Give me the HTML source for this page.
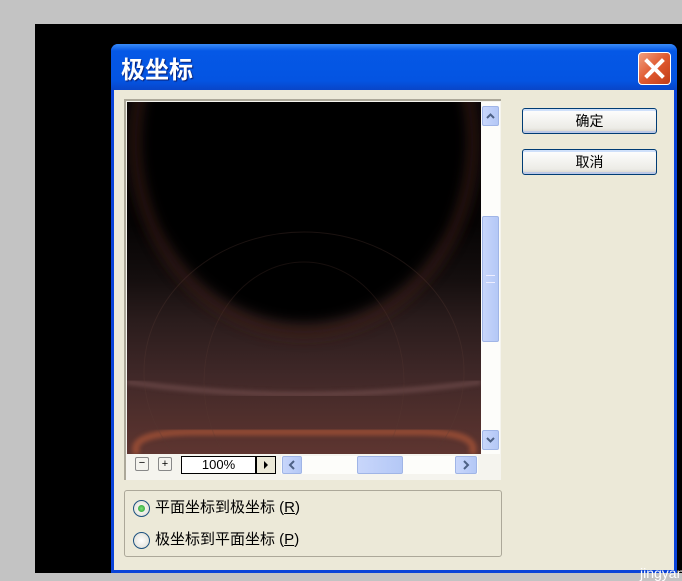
<!DOCTYPE html>
<html><head><meta charset="utf-8"><style>
*{margin:0;padding:0;box-sizing:border-box}
body{width:682px;height:580px;background:#c3c3c3;position:relative;overflow:hidden;font-family:"Liberation Sans","Noto Sans CJK SC",sans-serif}
.a{position:absolute}
.btn{position:absolute;left:522px;width:135px;height:26px;border:1px solid #003c74;border-radius:3px;background:linear-gradient(#fff,#ecebe6 80%,#d6d0c5);font-size:14px;text-align:center;line-height:24px;color:#000;box-shadow:inset 0 -2px 0 #bcc8e6,inset 0 2px 0 #cfe0fa}
.sb{background:linear-gradient(90deg,#c8d6fb,#b4c8f6);border:1px solid #a0b5e6;border-radius:2px}
</style></head><body>
<div class="a" style="left:35px;top:24px;width:647px;height:549px;background:#000"></div>
<div class="a" style="left:111px;top:44px;width:566px;height:529px;background:#0a43d8;border-radius:7px 7px 0 0"></div>
<div class="a" style="left:111px;top:44px;width:566px;height:46px;border-radius:7px 7px 0 0;background:linear-gradient(#3a8cf8,#0558e6 15%,#0454e2 80%,#0845c8)"></div>
<div class="a" style="left:121px;top:52px;color:#fff;font-size:24px;font-weight:bold;text-shadow:1px 1px 1px #0a1e6e;font-family:'Noto Sans CJK SC',sans-serif;line-height:32px">极坐标</div>
<div class="a" style="left:638px;top:52px;width:33px;height:33px;border:1px solid #fff;border-radius:4px;background:linear-gradient(135deg,#f0a080,#e05a30 50%,#c03c18)">
<svg width="31" height="31" viewBox="0 0 31 31"><path d="M8 8L23 23M23 8L8 23" stroke="#fff" stroke-width="4" stroke-linecap="square"/></svg></div>
<div class="a" style="left:114px;top:90px;width:560px;height:480px;background:#ece9d8"></div>
<div class="a" style="left:124px;top:99px;width:377px;height:381px;background:#f5f4ee;border-top:2px solid #aca899;border-left:2px solid #aca899"></div>
<div class="a" style="left:127px;top:102px;width:354px;height:352px;background:linear-gradient(#040304 0%,#060404 35%,#140e0e 50%,#2a1c1c 62%,#402828 78%,#5e3530 100%);overflow:hidden">
<svg width="354" height="352" style="position:absolute;left:0;top:0">
<defs><filter id="b"><feGaussianBlur stdDeviation="6"/></filter><filter id="c"><feGaussianBlur stdDeviation="2"/></filter></defs>
<ellipse cx="177" cy="40" rx="168" ry="190" fill="none" stroke="#3a1a12" stroke-width="14" filter="url(#b)" opacity=".6"/>
<ellipse cx="177" cy="40" rx="158" ry="180" fill="#040304" filter="url(#b)"/>
<path d="M0 280 Q177 305 354 280" stroke="#7a5454" stroke-width="5" fill="none" opacity=".6" filter="url(#c)"/>
<path d="M10 352 Q0 330 70 330 L290 330 Q354 330 345 352" stroke="#b85a38" stroke-width="7" fill="none" opacity=".6" filter="url(#c)"/>
<ellipse cx="177" cy="270" rx="160" ry="140" fill="none" stroke="#5a3a34" stroke-width="1" opacity=".3"/>
<ellipse cx="177" cy="280" rx="100" ry="120" fill="none" stroke="#5a3a34" stroke-width="1" opacity=".25"/>
</svg></div>
<div class="a" style="left:481px;top:102px;width:19px;height:352px;background:#fdfdfa"></div>
<div class="a sb" style="left:482px;top:106px;width:17px;height:20px"><svg width="15" height="18"><path d="M4 11L7.5 7.5L11 11" stroke="#4d6185" stroke-width="2" fill="none"/></svg></div>
<div class="a sb" style="left:482px;top:216px;width:17px;height:126px"></div>
<div class="a" style="left:486px;top:275px;width:9px;height:8px;border-top:1px solid #eef;border-bottom:1px solid #eef"></div>
<div class="a sb" style="left:482px;top:430px;width:17px;height:20px"><svg width="15" height="18"><path d="M4 7L7.5 10.5L11 7" stroke="#4d6185" stroke-width="2" fill="none"/></svg></div>
<div class="a" style="left:135px;top:457px;width:14px;height:14px;border:1px solid #888;border-radius:2px;background:#f4f3ee;font-size:11px;line-height:11px;text-align:center">−</div>
<div class="a" style="left:158px;top:457px;width:14px;height:14px;border:1px solid #888;border-radius:2px;background:#f4f3ee;font-size:11px;line-height:12px;text-align:center">+</div>
<div class="a" style="left:181px;top:456px;width:75px;height:18px;border:1px solid #000;background:#fff;font-size:13px;text-align:center;line-height:16px">100%</div>
<div class="a" style="left:256px;top:456px;width:20px;height:18px;border:1px solid #000;background:#ece9d8"><svg width="18" height="16"><path d="M7 4L11 8L7 12Z" fill="#000"/></svg></div>
<div class="a" style="left:281px;top:456px;width:197px;height:18px;background:#fdfdfa"></div>
<div class="a sb" style="left:282px;top:456px;width:20px;height:18px"><svg width="18" height="16"><path d="M11 4L7 8L11 12" stroke="#4d6185" stroke-width="2" fill="none"/></svg></div>
<div class="a sb" style="left:357px;top:456px;width:46px;height:18px"></div>
<div class="a sb" style="left:455px;top:456px;width:22px;height:18px"><svg width="20" height="16"><path d="M8 4L12 8L8 12" stroke="#4d6185" stroke-width="2" fill="none"/></svg></div>
<div class="a" style="left:124px;top:490px;width:378px;height:67px;border:1px solid #aca899;border-radius:3px"></div>
<div class="a" style="left:133px;top:500px;width:17px;height:17px;border:1px solid #1c5180;border-radius:50%;background:radial-gradient(#fff,#dcdad0)"><div class="a" style="left:4px;top:4px;width:7px;height:7px;border-radius:50%;background:radial-gradient(#7de07a,#1f9b2e)"></div></div>
<div class="a" style="left:155px;top:498px;font-size:15px;line-height:20px">平面坐标到极坐标 (<u>R</u>)</div>
<div class="a" style="left:133px;top:532px;width:17px;height:17px;border:1px solid #1c5180;border-radius:50%;background:radial-gradient(#fff,#dcdad0)"></div>
<div class="a" style="left:155px;top:530px;font-size:15px;line-height:20px">极坐标到平面坐标 (<u>P</u>)</div>
<div class="btn" style="top:108px">确定</div>
<div class="btn" style="top:149px">取消</div>
<div class="a" style="left:640px;top:565px;color:#fff;font-size:14px">jingyan.b</div>
</body></html>
